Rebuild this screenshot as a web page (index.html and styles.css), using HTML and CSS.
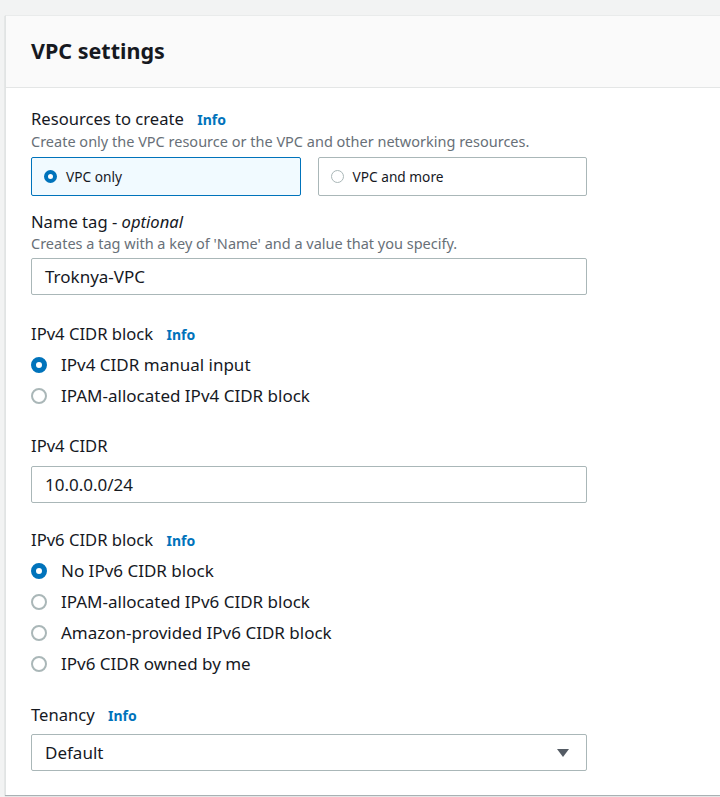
FILE: index.html
```html
<!DOCTYPE html>
<html>
<head>
<meta charset="utf-8">
<link rel="stylesheet" href="styles.css">
</head>
<body>
<div class="card">
  <div class="card-header"><h2 class="title">VPC settings</h2></div>
  <div class="card-body">
    <div class="field">
      <div class="label">Resources to create <span class="info">Info</span></div>
      <div class="desc">Create only the VPC resource or the VPC and other networking resources.</div>
      <div class="tiles">
        <div class="tile selected"><span class="radio small checked"></span><span>VPC only</span></div>
        <div class="tile"><span class="radio small"></span><span>VPC and more</span></div>
      </div>
    </div>
    <div class="field f-name">
      <div class="label">Name tag - <em>optional</em></div>
      <div class="desc">Creates a tag with a key of 'Name' and a value that you specify.</div>
      <div class="input">Troknya-VPC</div>
    </div>
    <div class="field f-ipv4">
      <div class="label">IPv4 CIDR block <span class="info">Info</span></div>
      <div class="radios">
        <div class="opt"><span class="radio checked"></span>IPv4 CIDR manual input</div>
        <div class="opt"><span class="radio"></span>IPAM-allocated IPv4 CIDR block</div>
      </div>
    </div>
    <div class="field f-cidr">
      <div class="label">IPv4 CIDR</div>
      <div class="input">10.0.0.0/24</div>
    </div>
    <div class="field f-ipv6">
      <div class="label">IPv6 CIDR block <span class="info">Info</span></div>
      <div class="radios">
        <div class="opt"><span class="radio checked"></span>No IPv6 CIDR block</div>
        <div class="opt"><span class="radio"></span>IPAM-allocated IPv6 CIDR block</div>
        <div class="opt"><span class="radio"></span>Amazon-provided IPv6 CIDR block</div>
        <div class="opt"><span class="radio"></span>IPv6 CIDR owned by me</div>
      </div>
    </div>
    <div class="field f-ten">
      <div class="label">Tenancy <span class="info">Info</span></div>
      <div class="input select"><span>Default</span><svg class="caret" width="12" height="10" viewBox="0 0 12 10"><path d="M0 1 H12 L6 9 Z" fill="#545b64"/></svg></div>
    </div>
  </div>
</div>
</body>
</html>
```
FILE: styles.css
```css
html, body { margin: 0; padding: 0; }
body {
  background: #f2f3f3;
  font-family: "Noto Sans", "Open Sans", sans-serif;
  color: #16191f;
  width: 720px;
  height: 797px;
  overflow: hidden;
}
.card {
  margin: 15px 0 0 5px;
  background: #fff;
  border-left: 1px solid #e1e4e4;
  border-top: 1px solid #e9ebeb;
  box-shadow: 0 1px 1px rgba(0,28,36,0.3);
  width: 730px;
}
.card-header {
  background: #fafafa;
  border-bottom: 1px solid #e4e6e6;
  height: 71px;
  display: flex;
  align-items: center;
  padding-left: 25px;
}
.title {
  margin: 0;
  font-size: 21.5px;
  font-weight: 700;
  letter-spacing: 0;
  padding-bottom: 2px;
}
.card-body {
  padding: 20px 0 24px 25px;
  width: 556px;
}
.label {
  font-size: 16.6px;
  line-height: 22px;
}
.info {
  color: #0073bb;
  font-weight: 700;
  font-size: 14px;
  margin-left: 9px;
}
.desc {
  font-size: 14.5px;
  color: #687078;
  line-height: 20px;
}
.tiles {
  display: flex;
  gap: 17px;
  margin-top: 6px;
}
.tile {
  flex: 1;
  height: 37px;
  border: 1px solid #aab7b8;
  border-radius: 2px;
  display: flex;
  align-items: center;
  padding-left: 12px;
  font-size: 13.7px;
  gap: 9px;
}
.tile.selected {
  border-color: #0073bb;
  background: #f1faff;
}
.radio {
  box-sizing: border-box;
  width: 16px;
  height: 16px;
  border-radius: 50%;
  border: 2px solid #aab7b8;
  flex: none;
  display: inline-block;
}
.radio.checked {
  border: 5px solid #0073bb;
  background: #fff;
}
.radio.small {
  width: 13px;
  height: 13px;
  border-width: 1.5px;
}
.radio.small.checked {
  border-width: 4px;
}
.f-name { margin-top: 15px; }
.input {
  box-sizing: border-box;
  height: 37px;
  margin-top: 5px;
  border: 1px solid #aab7b8;
  border-radius: 2px;
  display: flex;
  align-items: center;
  padding-left: 13px;
  font-size: 17px;
}
.f-ipv4 { margin-top: 28px; }
.radios { margin-top: 8px; display: flex; flex-direction: column; gap: 9px; }
.opt {
  display: flex;
  align-items: center;
  gap: 14px;
  font-size: 17px;
  line-height: 22px;
}
.f-cidr { margin-top: 28px; }
.f-cidr .input { margin-top: 9px; }
.f-ipv6 { margin-top: 26px; }
.f-ten { margin-top: 29px; }
.f-ten .input { margin-top: 7px; }
.select {
  justify-content: space-between;
  padding-right: 17px;
}
.caret { display: block; }
```
